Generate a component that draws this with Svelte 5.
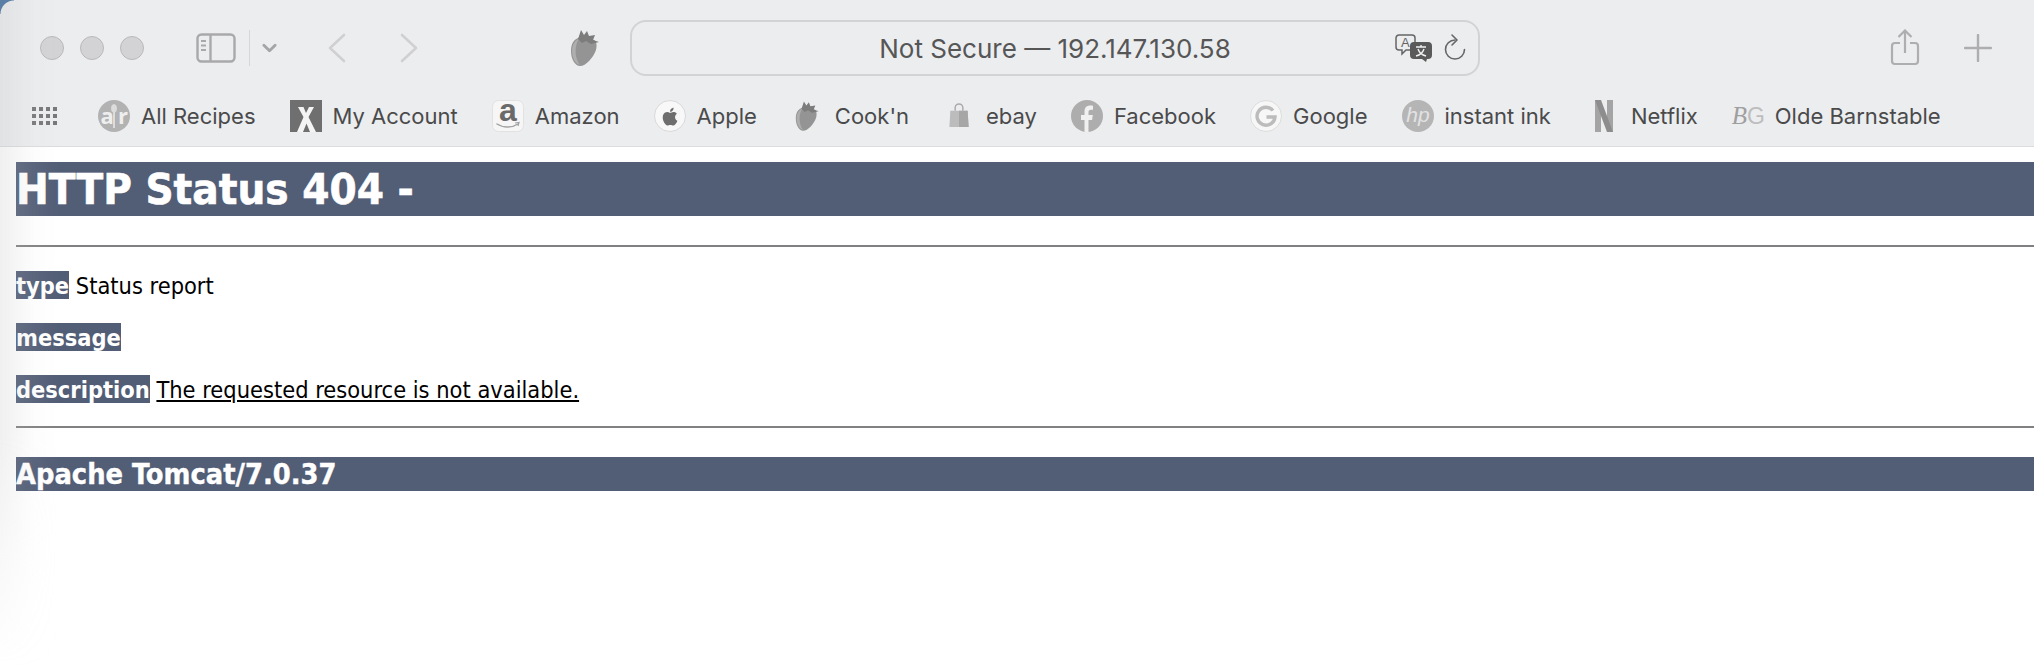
<script lang="ts">
	// Bookmark bar entries, in display order
	const bookmarks = [
		{ icon: 'ar', label: 'All Recipes' },
		{ icon: 'x', label: 'My Account' },
		{ icon: 'amazon', label: 'Amazon' },
		{ icon: 'apple', label: 'Apple' },
		{ icon: 'berry', label: "Cook'n" },
		{ icon: 'bag', label: 'ebay' },
		{ icon: 'fb', label: 'Facebook' },
		{ icon: 'google', label: 'Google' },
		{ icon: 'hp', label: 'instant ink' },
		{ icon: 'netflix', label: 'Netflix' },
		{ icon: 'bg', label: 'Olde Barnstable' }
	];
	const dots = Array.from({ length: 12 }, (_, i) => i);
</script>

{#snippet berry()}
	<svg class="berry" viewBox="0 0 32 38">
		<path d="M8 9C3 11 1 16 1 22c0 8 4 15 9 15 6 0 13-8 16-16 1-4 1-8-2-10-4-3-12-4-16-2z" fill="#949494" />
		<path d="M9 10c-3 4-4 10-3 17 1 4 2 7 4 9-5-1-8-8-8-14 0-6 3-11 7-12z" fill="#aeaeae" />
		<path d="M8 10l3-9 3 5 3-4 2 5 6-1-2 5 6 2-8 2-5-3-4 2z" fill="#7c7c7c" />
	</svg>
{/snippet}

<div class="window">
	<header class="toolbar">
		<div class="lights">
			<span class="light"></span>
			<span class="light"></span>
			<span class="light"></span>
		</div>

		<svg class="sidebar-icon" viewBox="0 0 40 30">
			<rect x="1.5" y="1.5" width="37" height="27" rx="4" fill="none" stroke="#a9a9ab" stroke-width="2.4" />
			<path d="M14.5 2v26" stroke="#a9a9ab" stroke-width="2.4" />
			<path d="M5 8h5M5 12.500h5M5 17h5" stroke="#a9a9ab" stroke-width="1.800" />
		</svg>
		<span class="divider"></span>
		<svg class="small-chevron" viewBox="0 0 16 10">
			<path d="M2 2l6 6 6-6" fill="none" stroke="#a5a5a7" stroke-width="3" stroke-linecap="round" stroke-linejoin="round" />
		</svg>

		<svg class="nav back" viewBox="0 0 18 30">
			<path d="M16 2L2 15l14 13" fill="none" stroke="#d0d0d2" stroke-width="2.600" stroke-linecap="round" stroke-linejoin="round" />
		</svg>
		<svg class="nav forward" viewBox="0 0 18 30">
			<path d="M2 2l14 13L2 28" fill="none" stroke="#d0d0d2" stroke-width="2.600" stroke-linecap="round" stroke-linejoin="round" />
		</svg>

		<div class="tab-berry">{@render berry()}</div>

		<div class="address">
			<span class="url">Not Secure — 192.147.130.58</span>
			<svg class="translate" viewBox="0 0 38 28">
				<path d="M4 1h13a3 3 0 0 1 3 3v9a3 3 0 0 1-3 3H11l-4 4v-4H4a3 3 0 0 1-3-3V4a3 3 0 0 1 3-3z" fill="#ecedef" stroke="#656566" stroke-width="1.500" />
				<text x="6" y="13" class="translate-a">A</text>
				<path d="M19 8h14a4 4 0 0 1 4 4v9a4 4 0 0 1-4 4h-1l-1 3-4-3h-8a4 4 0 0 1-4-4v-9a4 4 0 0 1 4-4z" fill="#5a5a5b" />
				<path d="M21 13h10M26 11v2M23 15c1 3 4 6 8 7M29 15c-1 3-4 6-8 7" fill="none" stroke="#f2f2f2" stroke-width="1.400" />
			</svg>
			<svg class="reload" viewBox="0 0 24 28">
				<path d="M12 6a9.500 9.500 0 1 0 9.500 9.500" fill="none" stroke="#666" stroke-width="1.600" stroke-linecap="round" />
				<path d="M9 1l5 5-5 5" fill="none" stroke="#666" stroke-width="1.600" stroke-linecap="round" stroke-linejoin="round" />
			</svg>
		</div>

		<svg class="share" viewBox="0 0 30 37">
			<path d="M10 14H5a3 3 0 0 0-3 3v15a3 3 0 0 0 3 3h20a3 3 0 0 0 3-3V17a3 3 0 0 0-3-3h-5" fill="none" stroke="#aeaeb0" stroke-width="2.200" />
			<path d="M15 24V2M8.500 8L15 1.500 21.500 8" fill="none" stroke="#aeaeb0" stroke-width="2.200" />
		</svg>
		<svg class="plus" viewBox="0 0 28 28">
			<path d="M14 1v26M1 14h26" stroke="#aeaeb0" stroke-width="2.400" stroke-linecap="round" />
		</svg>
	</header>

	<nav class="bookmarks">
		<div class="grid-icon">
			{#each dots as d (d)}
				<span class="dot"></span>
			{/each}
		</div>

		{#each bookmarks as b (b.label)}
			<div class="bookmark" class:wide={b.icon === 'bg'}>
				{#if b.icon === 'ar'}
					<svg viewBox="0 0 32 32" class="mark">
						<circle cx="16" cy="16" r="16" fill="#b2b2b3" />
						<text x="2.500" y="24" class="ar">a</text>
						<text x="20" y="24" class="ar">r</text>
						<path d="M16 4a3.500 4.500 0 0 1 1 8.500V28h-2V12.500A3.500 4.500 0 0 1 16 4z" fill="#dcdcdd" />
					</svg>
				{:else if b.icon === 'x'}
					<svg viewBox="0 0 32 32" class="mark">
						<rect width="32" height="32" fill="#6f6f70" />
						<path d="M8 7h5.500l2.500 6 3-6h5l-5.500 10L26 32h-6l-3.500-8.500L13 32H7l6.500-15z" fill="#f4f4f4" />
					</svg>
				{:else if b.icon === 'amazon'}
					<svg viewBox="0 0 32 32" class="mark">
						<rect x="0.500" y="0.500" width="31" height="31" rx="6" fill="#f6f6f6" stroke="#e2e2e3" />
						<text x="16" y="21" class="amazon-a">a</text>
						<path d="M5 24c6 4 15 4 21 0" fill="none" stroke="#a2a2a3" stroke-width="1.500" stroke-linecap="round" />
						<path d="M23 23l4-0.500-1 3.500" fill="none" stroke="#a2a2a3" stroke-width="1.200" />
					</svg>
				{:else if b.icon === 'apple'}
					<svg viewBox="0 0 32 32" class="mark">
						<circle cx="16" cy="16" r="15.500" fill="#f8f8f8" stroke="#d9d9da" />
						<path d="M21 17.300c0-2.300 1.800-3.400 1.900-3.500-1.100-1.600-2.700-1.800-3.300-1.800-1.400-.1-2.700.8-3.400.8-.7 0-1.800-.8-3-.8-1.500 0-2.900.9-3.700 2.300-1.600 2.700-.4 6.800 1.100 9 .8 1.100 1.700 2.300 2.800 2.300 1.100 0 1.600-.7 3-.7s1.800.7 3 .7c1.200 0 2-1.100 2.700-2.300.9-1.200 1.200-2.500 1.200-2.600-.1 0-2.300-.9-2.300-3.400zM18.700 10.500c.6-.8 1-1.800.9-2.800-.9 0-1.900.6-2.600 1.400-.6.700-1 1.700-.9 2.700 1 .1 2-.5 2.600-1.300z" fill="#6e6e6f" />
					</svg>
				{:else if b.icon === 'berry'}
					<div class="mark-box">{@render berry()}</div>
				{:else if b.icon === 'bag'}
					<svg viewBox="0 0 22 26" class="bag">
						<path d="M7 8V5a4 4 0 0 1 8 0v3" fill="none" stroke="#a9a9aa" stroke-width="1.500" />
						<path d="M2 8h18l1 17H1z" fill="#bcbcbd" />
						<path d="M11 8h9l1 17H11z" fill="#a6a6a7" />
					</svg>
				{:else if b.icon === 'fb'}
					<svg viewBox="0 0 32 32" class="mark">
						<circle cx="16" cy="16" r="16" fill="#adadae" />
						<path d="M13.500 32V20H10v-5h3.500v-3.500c0-4 2.300-6 5.800-6 1.300 0 2.700.2 2.700.2v4h-2c-1.900 0-2.500 1.200-2.500 2.400V15h4.300l-.7 5H17.500v12z" fill="#f0f0f1" />
					</svg>
				{:else if b.icon === 'google'}
					<svg viewBox="0 0 32 32" class="mark">
						<circle cx="16" cy="16" r="15.500" fill="#f7f7f7" stroke="#dcdcdd" />
						<path d="M23 10.500A9 9 0 1 0 25 17H16.500" fill="none" stroke="#bcbcbd" stroke-width="3.400" />
					</svg>
				{:else if b.icon === 'hp'}
					<svg viewBox="0 0 32 32" class="mark">
						<circle cx="16" cy="16" r="16" fill="#b5b5b6" />
						<text x="16" y="22" class="hp">hp</text>
					</svg>
				{:else if b.icon === 'netflix'}
					<svg viewBox="0 0 18 32" class="netflix">
						<path d="M0 0h6v32l-6 0z" fill="#a4a4a5" />
						<path d="M12 0h6v32h-6z" fill="#a4a4a5" />
						<path d="M0 0h6l12 32h-6z" fill="#8d8d8e" />
					</svg>
				{:else}
					<span class="bg-mark"><i>B</i><span class="bg-g">G</span></span>
				{/if}
				<span class="label">{b.label}</span>
			</div>
		{/each}
	</nav>

	<main class="page">
		<h1>HTTP Status 404 -</h1>
		<hr />
		<p><b>type</b> Status report</p>
		<p><b>message</b> <u></u></p>
		<p><b>description</b> <u>The requested resource is not available.</u></p>
		<hr class="end" />
		<h3>Apache Tomcat/7.0.37</h3>
	</main>

	<!-- soft shadow of the window behind, over the left edge -->
	<div class="edge-shadow"></div>
	<div class="corner"></div>
</div>

<style>
	:global(body) {
		margin: 0;
		background: #fff;
	}

	.window {
		position: relative;
		width: 2034px;
		height: 668px;
		overflow: hidden;
		background: #fff;
		font-family: Inter, 'Liberation Sans', sans-serif;
	}

	.toolbar {
		display: flex;
		align-items: center;
		height: 95px;
		background: #ecedef;
		box-sizing: border-box;
		padding-left: 40px;
	}

	.lights {
		display: flex;
		gap: 16px;
		margin-right: 52px;
	}

	.light {
		width: 24px;
		height: 24px;
		border-radius: 50%;
		background: #d3d3d5;
		border: 1px solid #b9b9bb;
		box-sizing: border-box;
	}

	.sidebar-icon {
		width: 40px;
		height: 30px;
		margin-right: 13px;
	}

	.divider {
		width: 1px;
		height: 36px;
		background: #d6d6d8;
		margin-right: 12px;
	}

	.small-chevron {
		width: 15px;
		height: 10px;
		margin-right: 51px;
	}

	.nav {
		width: 18px;
		height: 30px;
	}

	.back {
		margin-right: 54px;
	}

	.forward {
		margin-right: 152px;
	}

	.tab-berry {
		margin-right: 28px;
		display: flex;
	}

	.berry {
		width: 32px;
		height: 38px;
	}

	.address {
		position: relative;
		display: flex;
		align-items: center;
		justify-content: flex-end;
		width: 850px;
		height: 56px;
		box-sizing: border-box;
		border: 2px solid #d2d3d5;
		border-radius: 16px;
		padding-right: 11px;
		margin-right: 410px;
	}

	.url {
		position: absolute;
		left: 0;
		right: 0;
		padding-top: 2px;
		text-align: center;
		font-size: 26px;
		color: #565657;
	}

	.translate {
		position: relative;
		width: 38px;
		height: 28px;
		margin-right: 10px;
	}

	.translate-a {
		font-size: 13px;
		fill: #656566;
		font-family: 'Liberation Sans', sans-serif;
	}

	.reload {
		position: relative;
		width: 24px;
		height: 28px;
	}

	.share {
		width: 30px;
		height: 37px;
		margin-right: 44px;
	}

	.plus {
		width: 28px;
		height: 28px;
	}

	.bookmarks {
		display: flex;
		align-items: center;
		height: 52px;
		background: #ecedef;
		border-bottom: 1px solid #dcdcde;
		box-sizing: border-box;
		padding: 0 0 10px 32px;
		gap: 34px;
	}

	.grid-icon {
		display: grid;
		grid-template-columns: repeat(4, 4px);
		grid-auto-rows: 4px;
		gap: 3px;
		width: 25px;
		margin-right: 7px;
	}

	.dot {
		background: #77777a;
	}

	.bookmark {
		display: flex;
		align-items: center;
		gap: 11px;
	}

	.mark {
		width: 32px;
		height: 32px;
		flex: none;
		overflow: visible;
	}

	.mark-box {
		width: 26px;
		margin: 0 3px 0 4px;
		display: flex;
	}

	.mark-box .berry {
		width: 26px;
		height: 32px;
	}

	.bag {
		width: 22px;
		height: 25px;
		margin: 0 5px 0 5px;
	}

	.netflix {
		width: 18px;
		height: 32px;
		margin: 0 7px 0 10px;
	}

	.label {
		font-size: 22px;
		color: #4a4a4b;
		white-space: nowrap;
	}

	.ar {
		font: bold 22px 'Open Sans', sans-serif;
		fill: #eee;
	}

	.amazon-a {
		font: bold 32px 'Liberation Sans', sans-serif;
		fill: #6a6a6b;
		text-anchor: middle;
	}

	.hp {
		font: italic 21px 'Liberation Sans', sans-serif;
		fill: #e2e2e3;
		text-anchor: middle;
	}

	.bg-mark {
		font: 25px 'Liberation Serif', serif;
		color: #9f9fa0;
		width: 32px;
		white-space: nowrap;
	}

	.bg-g {
		font-family: 'Liberation Sans', sans-serif;
		font-weight: 300;
		color: #bdbdbe;
		font-size: 23px;
	}

	.page {
		padding: 15px 0 0 16px;
		font-family: 'DejaVu Sans', sans-serif;
		font-stretch: condensed;
		color: #000;
		font-size: 23.400px;
	}

	h1 {
		margin: 0;
		height: 54px;
		line-height: 54px;
		font-size: 43.500px;
		font-weight: bold;
		color: #fff;
		background: #525d76;
		-webkit-text-stroke: 0.6px #fff;
	}

	hr {
		margin: 29px 0 0;
		height: 2px;
		border: 0;
		background: #808082;
	}

	hr.end {
		margin-top: 23px;
	}

	p {
		margin: 0;
		height: 28px;
		line-height: 30px;
		margin-top: 24px;
		white-space: nowrap;
	}

	b {
		display: inline-block;
		height: 28px;
		background: #525d76;
		color: #fff;
		font-weight: bold;
	}

	h3 {
		margin: 29px 0 0;
		height: 34px;
		line-height: 34px;
		font-size: 28.700px;
		font-weight: bold;
		color: #fff;
		background: #525d76;
		-webkit-text-stroke: 0.4px #fff;
	}

	.edge-shadow {
		position: absolute;
		left: 0;
		top: 0;
		width: 60px;
		height: 668px;
		pointer-events: none;
		background: linear-gradient(90deg, rgba(190, 191, 193, 0.24), rgba(215, 216, 218, 0.07) 55%, rgba(255, 255, 255, 0));
		-webkit-mask-image: linear-gradient(180deg, #000 65%, transparent 100%);
		mask-image: linear-gradient(180deg, #000 65%, transparent 100%);
	}

	.corner {
		position: absolute;
		left: 0;
		top: 0;
		width: 14px;
		height: 14px;
		background: radial-gradient(circle at 14px 14px, transparent 13px, #5b7ea6 14px);
	}
</style>
